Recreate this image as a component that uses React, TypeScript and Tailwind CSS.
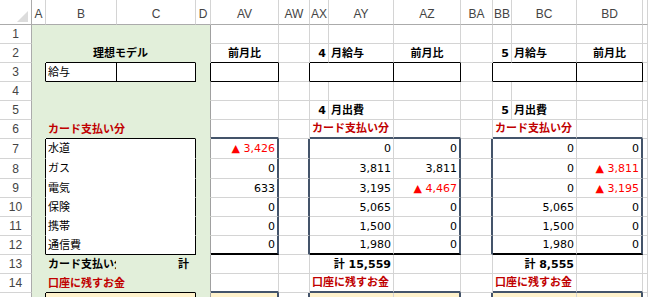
import type { ReactNode } from 'react';
import clsx from 'clsx';

// edge styles: right border / bottom border of each cell
const R = {
  g: 'border-r border-r-[#d4d4d4]',
  n: 'border-r border-r-transparent',
  k: 'border-r border-r-black',
  s: 'border-r-2 border-r-[#44546a]',
  e: 'border-r border-r-[#a0a0a0]',
};
const B = {
  g: 'border-b border-b-[#d4d4d4]',
  n: 'border-b border-b-transparent',
  k: 'border-b border-b-black',
  K: 'border-b-2 border-b-black',
  s: 'border-b-2 border-b-[#44546a]',
};
const BG = { green: 'bg-[#e2efda]', white: 'bg-white', beige: 'bg-[#fff2cc]' };
const ALIGN = {
  l: 'justify-start pl-[2px]',
  r: 'justify-end pr-[2px]',
  r6: 'justify-end pr-[6px]',
  c: 'justify-center',
};
const TONE = { plain: '', bold: 'font-bold', red: 'font-bold text-[#c00000]' };

interface CellDef {
  r: keyof typeof R;
  b: keyof typeof B;
  span?: boolean;
  bg?: keyof typeof BG;
  align?: keyof typeof ALIGN;
  tone?: keyof typeof TONE;
  text?: ReactNode;
}

const plain: CellDef = { r: 'g', b: 'g' };
const green = (r: CellDef['r'] = 'n', b: CellDef['b'] = 'n', extra: Partial<CellDef> = {}): CellDef => ({
  r,
  b,
  bg: 'green',
  ...extra,
});

const up = (v: string) => <span className="text-[#ff0000]">▲ {v}</span>;

const labels = ['水道', 'ガス', '電気', '保険', '携帯', '通信費'];
const av: ReactNode[] = [up('3,426'), '0', '633', '0', '0', '0'];
const ay: ReactNode[] = ['0', '3,811', '3,195', '5,065', '1,500', '1,980'];
const az: ReactNode[] = ['0', '3,811', up('4,467'), '0', '0', '0'];
const bc: ReactNode[] = ['0', '0', '0', '5,065', '1,500', '1,980'];
const bd: ReactNode[] = ['0', up('3,811'), up('3,195'), '0', '0', '0'];

const colHeads = ['A', 'B', 'C', 'D', 'AV', 'AW', 'AX', 'AY', 'AZ', 'BA', 'BB', 'BC', 'BD', ''];

const emptyLeft: CellDef[] = [green(), green(), green(), green('e')];

function buildRows(): CellDef[][] {
  const rows: CellDef[][] = [];

  // 1
  rows.push([...emptyLeft, ...Array(10).fill(plain)]);
  // 2
  rows.push([
    green(),
    green('n', 'k', { span: true, align: 'c', tone: 'bold', text: '理想モデル' }),
    green('e'),
    { r: 'g', b: 'k', align: 'c', tone: 'bold', text: '前月比' },
    plain,
    { r: 'g', b: 'k', align: 'r', tone: 'bold', text: '4' },
    { r: 'g', b: 'k', tone: 'bold', text: '月給与' },
    { r: 'g', b: 'k', align: 'c', tone: 'bold', text: '前月比' },
    plain,
    { r: 'g', b: 'k', align: 'r', tone: 'bold', text: '5' },
    { r: 'g', b: 'k', tone: 'bold', text: '月給与' },
    { r: 'g', b: 'k', align: 'c', tone: 'bold', text: '前月比' },
    plain,
  ]);
  // 3
  rows.push([
    green('k'),
    { r: 'k', b: 'k', text: '給与' },
    { r: 'k', b: 'k' },
    green('k'),
    { r: 'k', b: 'k' },
    { r: 'k', b: 'g' },
    { r: 'k', b: 'k', span: true },
    { r: 'k', b: 'k' },
    { r: 'k', b: 'g' },
    { r: 'k', b: 'k', span: true },
    { r: 'k', b: 'k' },
    plain,
  ]);
  // 4
  rows.push([...emptyLeft, ...Array(10).fill(plain)]);
  // 5
  rows.push([
    ...emptyLeft,
    plain,
    plain,
    { r: 'g', b: 'g', align: 'r', tone: 'bold', text: '4' },
    { r: 'g', b: 'g', tone: 'bold', text: '月出費' },
    plain,
    plain,
    { r: 'g', b: 'g', align: 'r', tone: 'bold', text: '5' },
    { r: 'g', b: 'g', tone: 'bold', text: '月出費' },
    plain,
    plain,
  ]);
  // 6
  rows.push([
    green(),
    green('n', 'k', { span: true, tone: 'red', text: 'カード支払い分' }),
    green('e'),
    { r: 'g', b: 's' },
    plain,
    { r: 'g', b: 's', span: true, tone: 'red', text: 'カード支払い分' },
    { r: 'g', b: 's' },
    plain,
    { r: 'g', b: 's', span: true, tone: 'red', text: 'カード支払い分' },
    { r: 'g', b: 's' },
    plain,
  ]);
  // 7 - 12
  labels.forEach((label, i) => {
    const last = i === labels.length - 1;
    const bb: CellDef['b'] = last ? 'K' : 'g';
    rows.push([
      green('k'),
      { r: 'k', b: last ? 'k' : 'n', span: true, text: label },
      green('e'),
      { r: 's', b: bb, align: 'r', text: av[i] },
      { r: 's', b: 'g' },
      { r: 'g', b: bb, span: true, align: 'r', text: ay[i] },
      { r: 's', b: bb, align: 'r', text: az[i] },
      { r: 's', b: 'g' },
      { r: 'g', b: bb, span: true, align: 'r', text: bc[i] },
      { r: 's', b: bb, align: 'r', text: bd[i] },
      plain,
    ]);
  });
  // 13
  rows.push([
    green(),
    green('n', 'n', { tone: 'bold', text: 'カード支払い分' }),
    green('n', 'n', { tone: 'bold', align: 'r6', text: '計' }),
    green('e'),
    plain,
    plain,
    { r: 'g', b: 'g', span: true, align: 'r', tone: 'bold', text: '計 15,559' },
    plain,
    plain,
    { r: 'g', b: 'g', span: true, align: 'r', tone: 'bold', text: '計 8,555' },
    plain,
    plain,
  ]);
  // 14
  rows.push([
    green(),
    green('n', 'k', { span: true, tone: 'red', text: '口座に残すお金' }),
    green('e'),
    { r: 'g', b: 's' },
    plain,
    { r: 'g', b: 's', span: true, tone: 'red', text: '口座に残すお金' },
    { r: 'g', b: 's' },
    plain,
    { r: 'g', b: 's', span: true, tone: 'red', text: '口座に残すお金' },
    { r: 'g', b: 's' },
    plain,
  ]);
  // 15 (cut off by the window)
  rows.push([
    green('k'),
    { r: 'k', b: 'n', span: true, bg: 'beige' },
    green('e'),
    { r: 's', b: 'n', bg: 'beige' },
    { r: 's', b: 'g' },
    { r: 'g', b: 'n', span: true, bg: 'beige' },
    { r: 's', b: 'n', bg: 'beige' },
    { r: 's', b: 'g' },
    { r: 'g', b: 'n', span: true, bg: 'beige' },
    { r: 's', b: 'n', bg: 'beige' },
    plain,
  ]);
  return rows;
}

function Cell({ d }: { d: CellDef }) {
  return (
    <div
      className={clsx(
        'flex items-center overflow-hidden whitespace-nowrap',
        R[d.r],
        B[d.b],
        d.span && 'col-span-2',
        BG[d.bg ?? 'white'],
        ALIGN[d.align ?? 'l'],
        TONE[d.tone ?? 'plain'],
      )}
    >
      {d.text}
    </div>
  );
}

export default function App() {
  const rows = buildRows();
  return (
    <div className="h-[297px] w-[648px] overflow-hidden bg-white">
      <div className="grid grid-cols-[32px_14px_71px_79px_15px_68px_31px_19px_65px_67px_32px_19px_65px_66px_5px] grid-rows-[25px_19px_19px_19px_19px_19px_19px_20px_20px_19px_19px_19px_19px_19px_19px_19px] font-['DejaVu_Sans','Noto_Sans_CJK_JP',sans-serif] text-[11px] leading-none text-black">
        {/* corner */}
        <div className="relative border-b border-r border-[#ababab] bg-white">
          <svg className="absolute bottom-[2px] right-[3px]" width="11" height="11" viewBox="0 0 11 11">
            <polygon points="11,0 11,11 0,11" fill="#dcdcdc" />
          </svg>
        </div>
        {colHeads.map((h, i) => (
          <div
            key={i}
            className="flex items-center justify-center border-b border-r border-b-[#ababab] border-r-[#d4d4d4] bg-white pt-[3px] font-['Liberation_Sans',sans-serif] text-[12px] text-[#444]"
          >
            {h}
          </div>
        ))}
        {rows.map((row, ri) => [
          <div
            key={`h${ri}`}
            className="flex items-center justify-center border-b border-r border-b-[#d4d4d4] border-r-[#ababab] bg-white font-['Liberation_Sans',sans-serif] text-[12px] text-[#444]"
          >
            {ri < 14 ? ri + 1 : ''}
          </div>,
          ...row.map((d, ci) => <Cell key={`${ri}-${ci}`} d={d} />),
        ])}
      </div>
    </div>
  );
}
